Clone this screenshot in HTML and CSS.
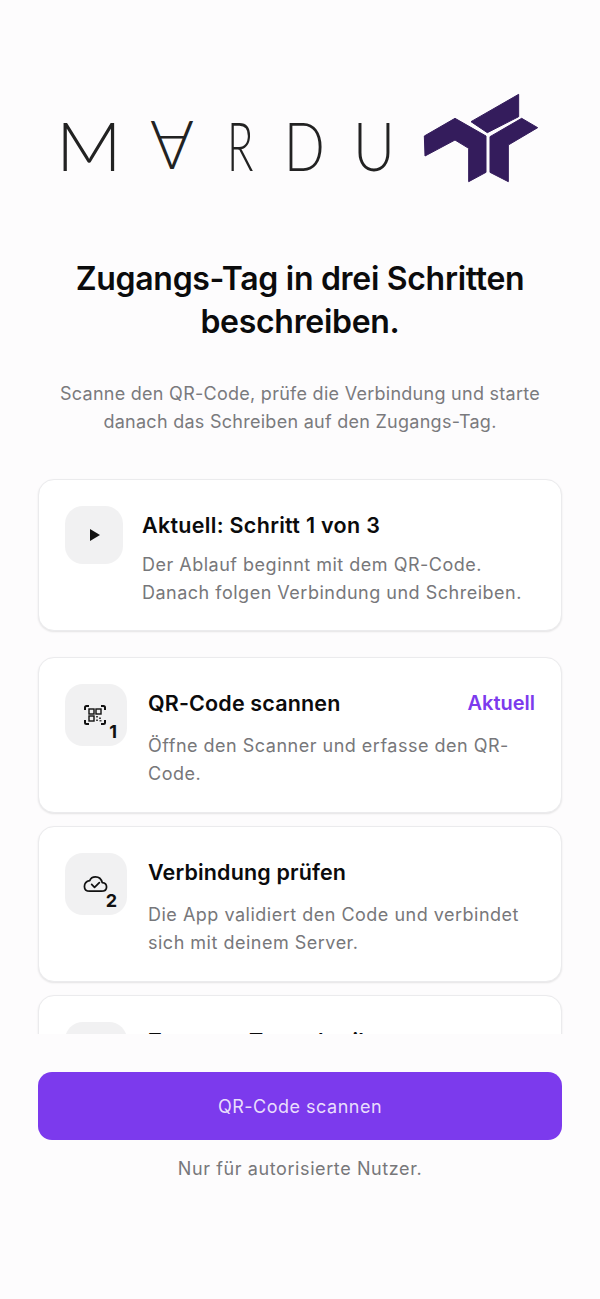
FILE: index.html
```html
<!DOCTYPE html>
<html lang="de">
<head>
  <meta charset="UTF-8" />
  <meta name="viewport" content="width=device-width, initial-scale=1.0"/>
  <title>Zugangs-Tag beschreiben</title>
  <link rel="stylesheet" href="styles.css">
</head>
<body>
  <div class="page">
    <div class="logo">
      <div class="wordmark">
        <span class="letter letter-m">M</span>
        <span class="letter letter-a">A</span>
        <span class="letter letter-r">R</span>
        <span class="letter letter-d">D</span>
        <span class="letter letter-u">U</span>
      </div>
      <svg class="mark" viewBox="0 0 420 315" width="140" height="105">
        <path d="M43 153 135 100 228 153V262L176 290V190L135 165 45 213Z" fill="#341c5c" stroke="#341c5c" stroke-width="3" stroke-linejoin="round"/>
        <path d="M183 110 326 28V95L232 143Z" fill="#341c5c" stroke="#341c5c" stroke-width="3" stroke-linejoin="round"/>
        <path d="M240 155 335 100 383 128 295 180V290L240 262Z" fill="#341c5c" stroke="#341c5c" stroke-width="3" stroke-linejoin="round"/>
      </svg>
    </div>

    <h1>Zugangs-Tag in drei Schritten beschreiben.</h1>
    <p class="intro">Scanne den QR-Code, prüfe die Verbindung und starte danach das Schreiben auf den Zugangs-Tag.</p>

    <div class="scroll">
      <div class="card card-status">
        <div class="icon-box icon-box-small">
          <svg class="play-icon" viewBox="0 0 12 14" width="12" height="14"><path d="M1 1 11 7 1 13Z" fill="#111"/></svg>
        </div>
        <div class="card-text">
          <div class="card-title card-title-wide">Aktuell: Schritt 1 von 3</div>
          <div class="card-desc">Der Ablauf beginnt mit dem QR-Code. Danach folgen Verbindung und Schreiben.</div>
        </div>
      </div>

      <div class="steps">
        <div class="card">
          <div class="icon-box">
            <svg class="step-icon" viewBox="0 0 22 20" width="22" height="20" fill="none" stroke="#111">
              <path d="M1 5V2.500Q1 1 2.500 1H5M17 1H19.500Q21 1 21 2.500V5M1 15V17.500Q1 19 2.500 19H5M17 19H19.500Q21 19 21 17.500V15" stroke-width="2"/>
              <rect x="5" y="4" width="5" height="5" stroke-width="1.400"/>
              <rect x="12" y="4" width="5" height="5" stroke-width="1.400"/>
              <rect x="5" y="11" width="5" height="5" stroke-width="1.400"/>
              <path d="M12 11H14V12.500H12ZM15 12.500H17V14H15ZM12 14.500H14V16H12ZM15.500 15H17.500V16.500H15.500Z" fill="#444" stroke="none"/>
            </svg>
            <span class="step-num">1</span>
          </div>
          <div class="card-text">
            <div class="card-head">
              <div class="card-title">QR-Code scannen</div>
              <div class="badge">Aktuell</div>
            </div>
            <div class="card-desc">Öffne den Scanner und erfasse den QR-Code.</div>
          </div>
        </div>

        <div class="card">
          <div class="icon-box">
            <svg class="step-icon" viewBox="0 0 26 18" width="25" height="18" fill="none" stroke="#111" stroke-width="1.800" stroke-linecap="round" stroke-linejoin="round">
              <path d="M7 16.500H19Q24.500 16.500 24.500 12 24.500 8 20 7.500 18.500 1.500 13 1.500 8.500 1.500 7 5.500 1.500 6.500 1.500 11.500 1.500 16.500 7 16.500Z"/>
              <path d="M9 9.500 12 12.500 17 7.500"/>
            </svg>
            <span class="step-num">2</span>
          </div>
          <div class="card-text">
            <div class="card-head">
              <div class="card-title">Verbindung prüfen</div>
            </div>
            <div class="card-desc">Die App validiert den Code und verbindet sich mit deinem Server.</div>
          </div>
        </div>

        <div class="card">
          <div class="icon-box"></div>
          <div class="card-text">
            <div class="card-head">
              <div class="card-title">Zugangs-Tag schreiben</div>
            </div>
          </div>
        </div>
      </div>
    </div>

    <button class="primary">QR-Code scannen</button>
    <p class="note">Nur für autorisierte Nutzer.</p>
  </div>
</body>
</html>
```

FILE: styles.css
```css
* {
  box-sizing: border-box;
}
body {
  margin: 0;
  background: #fdfcfd;
  font-family: 'Inter', sans-serif;
  color: #0b0b0c;
}
.page {
  height: 1299px;
  padding: 95px 38px 0;
  display: flex;
  flex-direction: column;
  overflow: hidden;
}
.logo {
  display: flex;
  align-items: flex-start;
  height: 105px;
  margin: -10px -38px 0;
  padding-left: 56px;
}
.wordmark {
  display: flex;
  flex: none;
  width: 354px;
  height: 105px;
  margin-top: 10px;
  font-family: 'Lato', sans-serif;
  font-weight: 300;
  font-size: 67px;
  line-height: 100px;
  color: #222;
}
.letter {
  display: block;
  flex: none;
  transform-origin: left;
}
.letter-m { width: 94px; transform: scaleX(1.08); }
.letter-a { width: 77px; transform: scaleY(-1); transform-origin: center 51px; }
.letter-r { width: 56.500px; transform: scaleX(.65); }
.letter-d { width: 69.500px; transform: scaleX(.8); }
.letter-u { width: 40px; transform: scaleX(.86); }
.mark {
  flex: none;
}
h1 {
  margin: 67px 0 0;
  padding: 0 20px;
  font-size: 32px;
  line-height: 43px;
  font-weight: 600;
  letter-spacing: -0.3px;
  text-align: center;
}
.intro {
  margin: 37px 0 0;
  padding: 0 20px;
  font-size: 18px;
  line-height: 28px;
  letter-spacing: 0.270px;
  color: #7a7a7d;
  text-align: center;
}
.scroll {
  height: 568px;
  margin: 30px -6px 0;
  padding: 13px 6px 0;
  overflow: hidden;
  flex: none;
}
.card {
  display: flex;
  gap: 21px;
  padding: 26px;
  background: #fff;
  border: 1.500px solid #ebebed;
  border-radius: 16px;
  box-shadow: 0 1px 2px rgba(0, 0, 0, .1);
}
.card-status {
  gap: 19px;
  height: 152px;
  margin-bottom: 26px;
}
.steps {
  display: flex;
  flex-direction: column;
  gap: 13px;
}
.steps .card {
  height: 156px;
}
.icon-box {
  flex: none;
  width: 62px;
  height: 62px;
  border-radius: 18px;
  background: #f1f1f2;
  position: relative;
  display: flex;
  align-items: center;
  justify-content: center;
}
.icon-box-small {
  width: 58px;
  height: 58px;
}
.play-icon {
  margin-left: 2px;
}
.step-icon {
  margin-left: -2px;
}
.step-num {
  position: absolute;
  right: 10px;
  bottom: 2px;
  font-size: 18px;
  line-height: 24px;
  font-weight: 700;
  color: #111;
}
.card-text {
  flex: 1;
  min-width: 0;
  padding-top: 5px;
}
.card-head {
  display: flex;
  justify-content: space-between;
  align-items: center;
}
.card-title {
  font-size: 21.500px;
  line-height: 28px;
  font-weight: 600;
  letter-spacing: 0.150px;
}
.card-title-wide {
  letter-spacing: 0.300px;
}
.badge {
  font-size: 20px;
  font-weight: 600;
  color: #7c3aed;
}
.card-desc {
  margin-top: 12px;
  font-size: 18px;
  line-height: 28px;
  letter-spacing: 0.500px;
  color: #77777a;
}
.steps .card-desc {
  margin-top: 15px;
}
.primary {
  flex: none;
  height: 68px;
  margin-top: 38px;
  border: none;
  border-radius: 14px;
  background: #7c3aed;
  color: #e9defc;
  font-family: inherit;
  font-size: 18px;
  font-weight: 400;
  letter-spacing: 0.500px;
}
.note {
  margin: 17px 0 0;
  font-size: 18px;
  line-height: 24px;
  letter-spacing: 0.600px;
  color: #77777a;
  text-align: center;
}
```
